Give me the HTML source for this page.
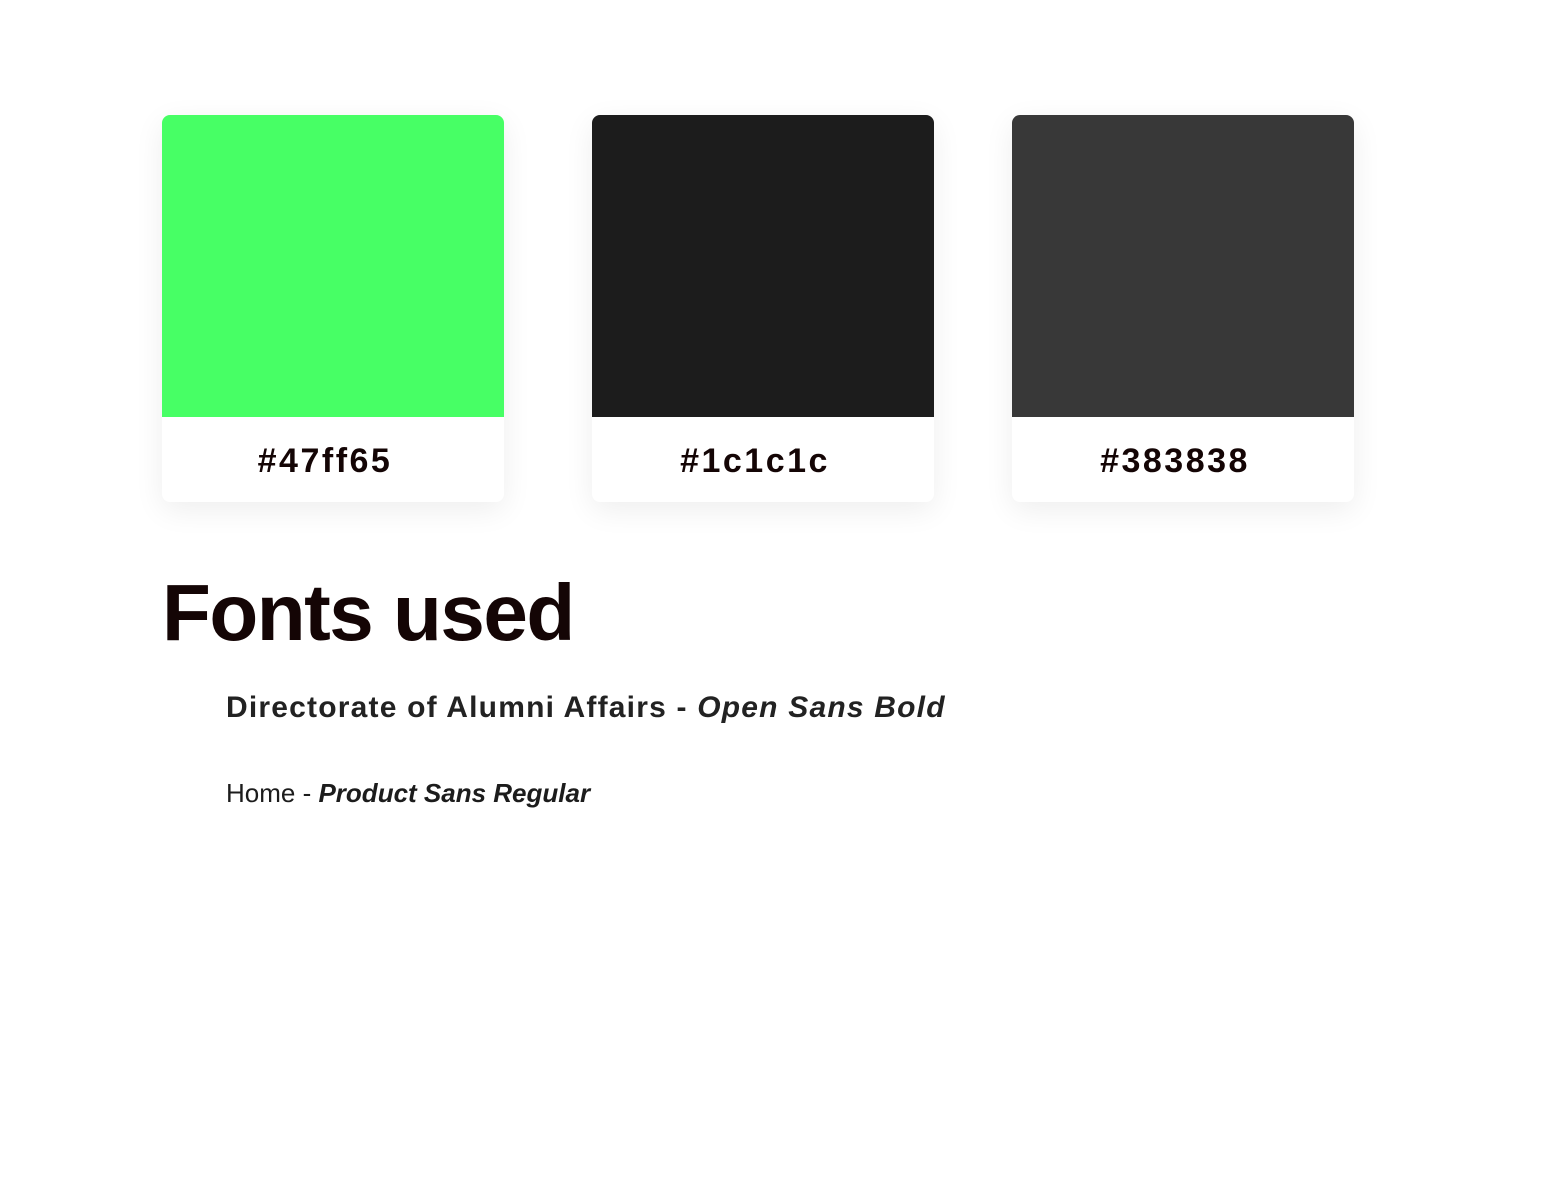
<!DOCTYPE html>
<html><head><meta charset="utf-8"><style>
html,body{margin:0;background:#fff;width:1552px;height:1189px;overflow:hidden;font-family:"Liberation Sans",sans-serif;}
.card{position:absolute;top:115px;width:342px;height:387px;border-radius:8px;background:#fff;box-shadow:0 8px 30px rgba(0,0,0,0.07);overflow:hidden}
.sw{height:302px}
.lbl{position:absolute;left:0;right:16px;text-align:center;font-weight:bold;font-size:34px;letter-spacing:2.5px;color:#140505;line-height:44px}
.card .lbl{top:324px}
h1{position:absolute;left:162px;top:568px;margin:0;font-size:80px;font-weight:bold;color:#140505;letter-spacing:-1.5px;line-height:90px}
.l2{position:absolute;left:226px;top:688px;font-size:30px;font-weight:bold;color:#222;line-height:40px;white-space:nowrap;letter-spacing:1.2px}
.l3{position:absolute;left:226px;top:775px;font-size:26px;color:#1c1c1c;line-height:36px;white-space:nowrap}
</style></head><body>
<div class="card" style="left:162px"><div class="sw" style="background:#47ff65"></div><div class="lbl">#47ff65</div></div>
<div class="card" style="left:592px"><div class="sw" style="background:#1c1c1c"></div><div class="lbl">#1c1c1c</div></div>
<div class="card" style="left:1012px"><div class="sw" style="background:#383838"></div><div class="lbl">#383838</div></div>
<h1>Fonts used</h1>
<div class="l2">Directorate of Alumni Affairs - <i>Open Sans Bold</i></div>
<div class="l3">Home - <b><i>Product Sans Regular</i></b></div>
</body></html>
